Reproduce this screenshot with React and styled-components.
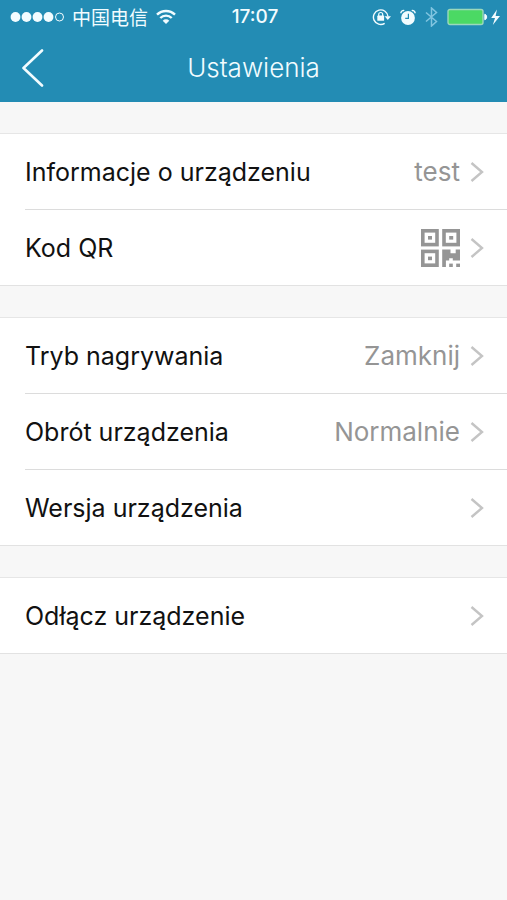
import React from "react";
import styled, { createGlobalStyle } from "styled-components";

const GlobalStyle = createGlobalStyle`
  *, *::before, *::after { box-sizing: border-box; }
  body {
    margin: 0;
    background: #f7f7f7;
    color: #111;
    font-family: Inter, "Noto Sans CJK SC", sans-serif;
  }
`;

const TopBar = styled.header`
  background: #238cb4;
  color: #f2fcff;
`;

const StatusBar = styled.div`
  display: grid;
  grid-template-columns: 1fr auto 1fr;
  align-items: center;
  height: 34px;
  padding: 0 7px 0 10px;
`;

const StatusGroup = styled.div`
  display: flex;
  align-items: center;
  justify-content: ${(p) => (p.$end ? "flex-end" : "flex-start")};
  gap: ${(p) => (p.$end ? "9px" : "8px")};
`;

const Carrier = styled.span`
  font-family: "Noto Sans CJK SC", sans-serif;
  font-size: 19px;
  line-height: 24px;
  white-space: nowrap;
`;

const Clock = styled.time`
  font-size: 19px;
  font-weight: 500;
  line-height: 24px;
`;

const NavBar = styled.div`
  display: grid;
  grid-template-columns: 64px 1fr 64px;
  align-items: center;
  height: 68px;
`;

const BackButton = styled.button`
  display: flex;
  align-items: center;
  height: 68px;
  padding: 0 0 0 21px;
  border: 0;
  background: none;
  color: inherit;
  cursor: pointer;
`;

const Title = styled.h1`
  margin: 0;
  font-size: 26px;
  font-weight: 300;
  line-height: 32px;
  text-align: center;
`;

const Main = styled.main`
  display: flex;
  flex-direction: column;
  gap: 31px;
  padding: 31px 0;
`;

const Group = styled.ul`
  margin: 0;
  padding: 0;
  list-style: none;
  background: #fff;
  border-top: 1px solid #e6e6e6;
  border-bottom: 1px solid #e2e2e2;
`;

const Item = styled.li`
  padding-left: 25px;
`;

const Row = styled.button`
  display: flex;
  align-items: center;
  width: 100%;
  height: ${(p) => (p.$last ? "75px" : "76px")};
  padding: 0 23px 0 0;
  border: 0;
  border-bottom: ${(p) => (p.$last ? "0" : "1px solid #dcdcdc")};
  background: none;
  color: inherit;
  font: inherit;
  font-size: 25px;
  line-height: 32px;
  text-align: left;
  cursor: pointer;
`;

const Label = styled.span`
  flex: 1;
`;

const Value = styled.span`
  display: flex;
  margin-right: 10px;
  color: #959595;
  font-size: 26px;
`;

const Signal = () => (
  <svg width="54" height="12" viewBox="0 0 54 12" role="img" aria-label="Signal">
    {[5, 16, 27, 38].map((x) => (
      <circle key={x} cx={x + 0.5} cy="6" r="4.9" fill="currentColor" />
    ))}
    <circle cx="49.5" cy="6" r="4" fill="none" stroke="currentColor" strokeWidth="1" />
  </svg>
);

const Wifi = () => (
  <svg width="20" height="16" viewBox="0 0 20 16" role="img" aria-label="Wi-Fi">
    <g fill="none" stroke="currentColor" strokeWidth="2.4">
      <path d="M1 5.7a12.8 12.8 0 0 1 18 0" />
      <path d="M4.3 9a8 8 0 0 1 11.4 0" />
    </g>
    <path d="M6.7 11.7a4.7 4.7 0 0 1 6.6 0L10 15z" fill="currentColor" />
  </svg>
);

const RotationLock = () => (
  <svg width="19" height="18" viewBox="0 0 19 18" role="img" aria-label="Rotation lock">
    <path d="M12.7 15.3A7.3 7.3 0 1 1 16 8.5" fill="none" stroke="currentColor" strokeWidth="1.4" />
    <path d="M12.7 8.2h6.3l-3.2 3.8z" fill="currentColor" />
    <rect x="5.3" y="7.6" width="6.8" height="5.2" rx="0.6" fill="currentColor" />
    <path d="M6.7 8V6.5a2 2 0 0 1 4 0V8" fill="none" stroke="currentColor" strokeWidth="1.2" />
  </svg>
);

const Alarm = () => (
  <svg width="16" height="17" viewBox="0 0 16 17" role="img" aria-label="Alarm">
    <circle cx="8" cy="9" r="6.9" fill="currentColor" />
    <path d="M.9 4.2a2.6 2.6 0 0 1 3.4-2.6M15.1 4.2a2.6 2.6 0 0 0-3.4-2.6" fill="none" stroke="currentColor" strokeWidth="1.5" />
    <path d="M8.4 4.8v4.6H5.2" fill="none" stroke="#238cb4" strokeWidth="1.2" />
  </svg>
);

const Bluetooth = () => (
  <svg width="13" height="20" viewBox="0 0 13 20" role="img" aria-label="Bluetooth">
    <path d="M1 5.5l10.5 9L6.5 19V1l5 4.5L1 14.5" fill="none" stroke="#82c5e0" strokeWidth="1.5" />
  </svg>
);

const Battery = () => (
  <svg width="53" height="18" viewBox="0 0 53 18" role="img" aria-label="Battery charging">
    <rect x="1" y="1.5" width="35" height="15" rx="2" fill="#4bd964" stroke="#9bd8bb" strokeWidth="1.4" />
    <path d="M37.8 6.2a3 3 0 0 1 0 5.6z" fill="currentColor" stroke="currentColor" />
    <path d="M50 1.5 44.2 10h3.8l-2.2 7L53 8h-4.4z" fill="currentColor" />
  </svg>
);

const BackIcon = () => (
  <svg width="23" height="38" viewBox="0 0 23 38" aria-hidden="true">
    <path d="M21 1.5 2.5 19 21 36.5" fill="none" stroke="currentColor" strokeWidth="2.6" strokeLinecap="round" strokeLinejoin="round" />
  </svg>
);

const Chevron = () => (
  <svg width="14" height="20" viewBox="0 0 14 20" aria-hidden="true">
    <path d="M1.5 1 12 10 1.5 19" fill="none" stroke="#c4c4c4" strokeWidth="2.4" />
  </svg>
);

const QrIcon = () => (
  <svg width="39" height="38" viewBox="0 0 39 38" aria-hidden="true">
    <g fill="none" stroke="currentColor" strokeWidth="3.6">
      <rect x="1.8" y="1.8" width="14.2" height="13.8" />
      <rect x="23" y="1.8" width="14.2" height="13.8" />
      <rect x="1.8" y="22.4" width="14.2" height="13.8" />
    </g>
    <g fill="currentColor">
      <rect x="7" y="7" width="4" height="3.6" />
      <rect x="28.2" y="7" width="4" height="3.6" />
      <rect x="7" y="27.6" width="4" height="3.6" />
      <path d="M21.2 20.6h8.3v3.6h5.2v-3.6H39v11h-7.2v-2.4h-3.6v2.4h-3.3V38h-3.7z" />
      <rect x="28.2" y="34.6" width="3.6" height="3.4" />
      <rect x="35.2" y="34.6" width="3.8" height="3.4" />
    </g>
  </svg>
);

const groups = [
  [
    { label: "Informacje o urządzeniu", value: "test" },
    { label: "Kod QR", value: <QrIcon /> },
  ],
  [
    { label: "Tryb nagrywania", value: "Zamknij" },
    { label: "Obrót urządzenia", value: "Normalnie" },
    { label: "Wersja urządzenia" },
  ],
  [{ label: "Odłącz urządzenie" }],
];

export default function App() {
  return (
    <>
      <GlobalStyle />
      <TopBar>
        <StatusBar>
          <StatusGroup>
            <Signal />
            <Carrier lang="zh">中国电信</Carrier>
            <Wifi />
          </StatusGroup>
          <Clock>17:07</Clock>
          <StatusGroup $end>
            <RotationLock />
            <Alarm />
            <Bluetooth />
            <Battery />
          </StatusGroup>
        </StatusBar>
        <NavBar>
          <BackButton type="button" aria-label="Wstecz">
            <BackIcon />
          </BackButton>
          <Title>Ustawienia</Title>
        </NavBar>
      </TopBar>
      <Main>
        {groups.map((rows, g) => (
          <Group key={g}>
            {rows.map((row, i) => (
              <Item key={row.label}>
                <Row type="button" $last={i === rows.length - 1}>
                  <Label>{row.label}</Label>
                  {row.value && <Value>{row.value}</Value>}
                  <Chevron />
                </Row>
              </Item>
            ))}
          </Group>
        ))}
      </Main>
    </>
  );
}
